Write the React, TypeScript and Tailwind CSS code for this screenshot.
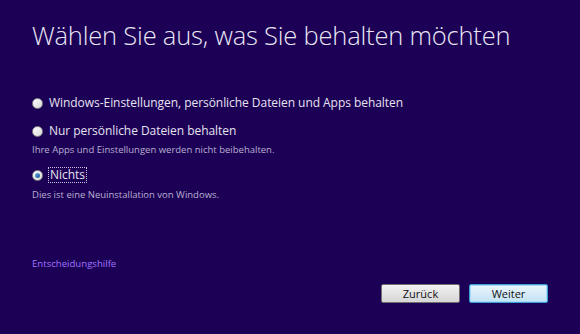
import React from "react";

function Radio({ checked }: { checked?: boolean }) {
  return (
    <span className="relative inline-flex h-[11px] w-[11px] shrink-0 items-center justify-center rounded-full border border-[#8a8a8a] bg-gradient-to-br from-[#ffffff] to-[#d8d8d8]">
      {checked && <span className="h-[5px] w-[5px] rounded-full bg-gradient-to-br from-[#5fb0e8] to-[#1a4f8a]" />}
    </span>
  );
}

export default function App() {
  return (
    <div className="flex h-[334px] w-[580px] flex-col bg-[#1c0056] pl-[32px] text-[#e6e2f0]" style={{ fontFamily: '"Open Sans", "Noto Sans", sans-serif' }}>
      <h1 className="mt-[18px] text-[25.5px] font-light leading-[34px] tracking-[-0.2px] text-[#e8e6f2]">
        Wählen Sie aus, was Sie behalten möchten
      </h1>
      <div className="mt-[43px] flex flex-col">
        <label className="flex h-[16px] items-center gap-[6px] text-[12px] tracking-[-0.05px]">
          <Radio />
          <span>Windows-Einstellungen, persönliche Dateien und Apps behalten</span>
        </label>
        <label className="mt-[12px] flex h-[16px] items-center gap-[6px] text-[12px] tracking-[-0.05px]">
          <Radio />
          <span>Nur persönliche Dateien behalten</span>
        </label>
        <div className="mt-[5px] text-[9.5px] leading-[12px] text-[#b8b0d0]">
          Ihre Apps und Einstellungen werden nicht beibehalten.
        </div>
        <label className="mt-[11px] flex h-[16px] items-center gap-[5px] text-[12px] tracking-[-0.05px]">
          <Radio checked />
          <span className="border border-dotted border-[#c8c0e0] px-[1px] leading-[14px]">Nichts</span>
        </label>
        <div className="mt-[6px] text-[9.5px] leading-[12px] text-[#b8b0d0]">
          Dies ist eine Neuinstallation von Windows.
        </div>
      </div>
      <div className="mt-[57px] text-[9.6px] leading-[12px] text-[#9f74ff]">Entscheidungshilfe</div>
      <div className="mt-[14px] flex justify-end gap-[9px] pr-[32px]">
        <button className="h-[19px] w-[79px] rounded-[2px] border border-[#707070] bg-gradient-to-b from-[#f2f2f2] to-[#d6d6d6] text-[11px] leading-[15px] text-[#111]" style={{ fontFamily: '"Open Sans", sans-serif' }}>
          Zurück
        </button>
        <button className="h-[19px] w-[79px] rounded-[2px] border border-[#3c9fd8] bg-gradient-to-b from-[#eaf6fd] to-[#c4e2f4] text-[11px] leading-[15px] text-[#111] shadow-[inset_0_0_0_1px_#a8dcf6]" style={{ fontFamily: '"Open Sans", sans-serif' }}>
          Weiter
        </button>
      </div>
    </div>
  );
}
